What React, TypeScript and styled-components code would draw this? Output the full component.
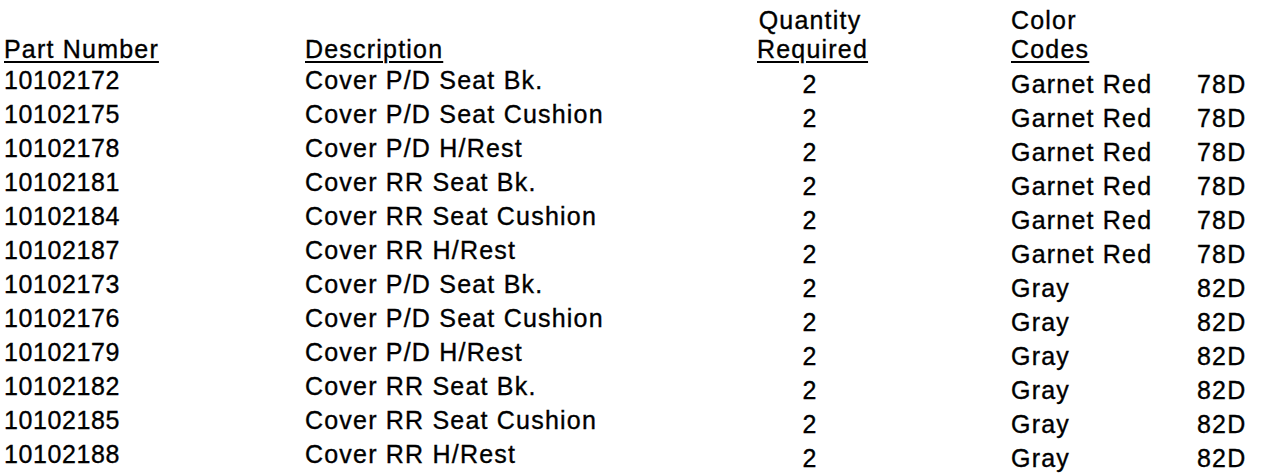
import styled, { createGlobalStyle } from "styled-components"

const GlobalStyle = createGlobalStyle`
    html, body {
        margin: 0;
        padding: 0;
        background: #ffffff;
    }
    body {
        font-family: "Liberation Sans", Arial, Helvetica, sans-serif;
        color: #000000;
    }
`

const Sheet = styled.div`
    width: 1280px;
    height: 474px;
    overflow: hidden;
    padding: 6px 0 0 4px;
    box-sizing: border-box;
    font-size: 25px;
    letter-spacing: 1.2px;
    -webkit-text-stroke: 0.35px #000;
`

const Grid = styled.div`
    display: grid;
    grid-template-columns: 301px 452px 254px 186px 1fr;
`

const HeadRow = styled(Grid)`
    align-items: end;
    line-height: 28.5px;
`

const Row = styled(Grid)`
    align-items: start;
    height: 34px;
    line-height: 34px;
`

const Head = styled.div<{ $center?: boolean }>`
    width: ${p => (p.$center ? "106px" : "auto")};
    text-align: ${p => (p.$center ? "center" : "left")};
    white-space: nowrap;
`

const Under = styled.span`
    text-decoration: underline;
    text-decoration-thickness: 2px;
    text-underline-offset: 3px;
`

const Cell = styled.div<{ $center?: boolean; $drop?: boolean }>`
    width: ${p => (p.$center ? "106px" : "auto")};
    text-align: ${p => (p.$center ? "center" : "left")};
    padding-top: ${p => (p.$drop ? "4px" : "0")};
    white-space: nowrap;
`

const NumCell = styled(Cell)`
    letter-spacing: 0.6px;
`

type Part = { num: string; desc: string; color: string; code: string }

const parts: Part[] = [
    { num: "10102172", desc: "Cover P/D Seat Bk.", color: "Garnet Red", code: "78D" },
    { num: "10102175", desc: "Cover P/D Seat Cushion", color: "Garnet Red", code: "78D" },
    { num: "10102178", desc: "Cover P/D H/Rest", color: "Garnet Red", code: "78D" },
    { num: "10102181", desc: "Cover RR Seat Bk.", color: "Garnet Red", code: "78D" },
    { num: "10102184", desc: "Cover RR Seat Cushion", color: "Garnet Red", code: "78D" },
    { num: "10102187", desc: "Cover RR H/Rest", color: "Garnet Red", code: "78D" },
    { num: "10102173", desc: "Cover P/D Seat Bk.", color: "Gray", code: "82D" },
    { num: "10102176", desc: "Cover P/D Seat Cushion", color: "Gray", code: "82D" },
    { num: "10102179", desc: "Cover P/D H/Rest", color: "Gray", code: "82D" },
    { num: "10102182", desc: "Cover RR Seat Bk.", color: "Gray", code: "82D" },
    { num: "10102185", desc: "Cover RR Seat Cushion", color: "Gray", code: "82D" },
    { num: "10102188", desc: "Cover RR H/Rest", color: "Gray", code: "82D" },
]

export default function App() {
    return (
        <Sheet>
            <GlobalStyle />
            <HeadRow>
                <Head><Under>Part Number</Under></Head>
                <Head><Under>Description</Under></Head>
                <Head $center>Quantity<br /><Under>Required</Under></Head>
                <Head>Color<br /><Under>Codes</Under></Head>
                <Head />
            </HeadRow>
            {parts.map(p => (
                <Row key={p.num}>
                    <NumCell>{p.num}</NumCell>
                    <Cell>{p.desc}</Cell>
                    <Cell $center $drop>2</Cell>
                    <Cell $drop>{p.color}</Cell>
                    <Cell $drop>{p.code}</Cell>
                </Row>
            ))}
        </Sheet>
    )
}
